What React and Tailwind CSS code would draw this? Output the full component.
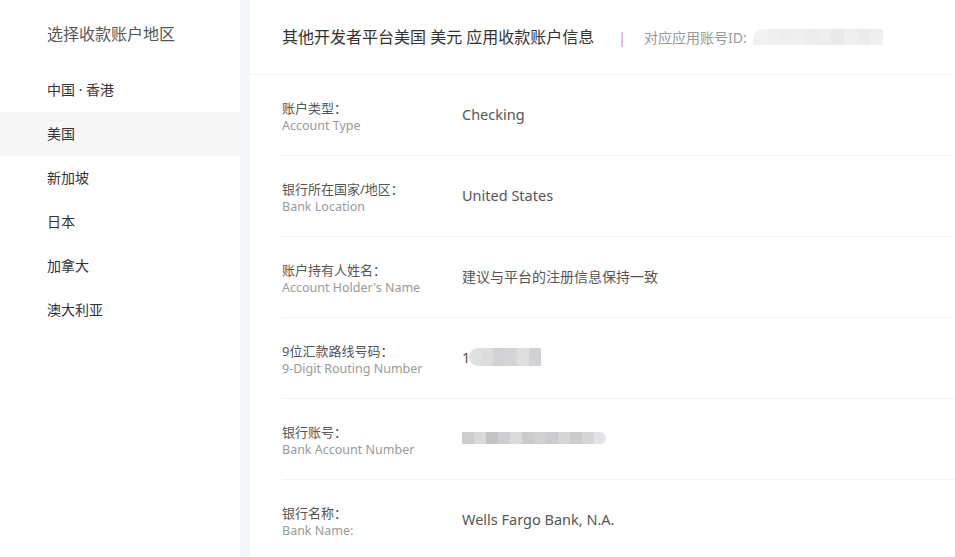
const regions = ['中国 · 香港', '美国', '新加坡', '日本', '加拿大', '澳大利亚'];

// blocs "floutés" : suites de gris
const idBlur = ['#f1f1f1', '#f0f0f0', '#eeeeee', '#efefef', '#ececec', '#eeeeee', '#e9e9e9', '#efefef', '#ebebeb', '#f0f0f0'];
const routingBlur = ['#e0e0e0', '#dcdcdc', '#d2d2d4', '#d4d4d6', '#dedede', '#d0d1d4'];
const accountBlur = ['#cdcdcd', '#d9d9d9', '#c3c3c3', '#cdced1', '#dadada', '#cbcbcb', '#d0d0d0', '#cacbcf', '#d6d6d6', '#ccccd0', '#d6d6d6', '#e0e2e6'];

function Blur({ colors, cell = 12, h = 12, rounded = '' }) {
  return (
    <span className={`inline-flex overflow-hidden ${rounded}`} style={{ height: h }}>
      {colors.map((c, i) => (
        <span key={i} style={{ width: cell, background: c }} />
      ))}
    </span>
  );
}

function Row({ zh, en, children }) {
  return (
    <div className="flex items-center h-[81px] border-b border-[#eef3f8]">
      <div className="w-[180px] shrink-0 pt-[2px]">
        <div className="text-[13px] leading-[18px] text-[#555]">{zh}</div>
        <div className="text-[12.5px] leading-[17px] text-[#999]">{en}</div>
      </div>
      <div className="text-[14.5px] text-[#555]">{children}</div>
    </div>
  );
}

export default function App() {
  return (
    <div className="flex w-[955px] h-[557px] overflow-hidden bg-[#f3f6fa] font-['Noto_Sans','Noto_Sans_CJK_SC',sans-serif]">
      <aside className="w-[240px] shrink-0 bg-white">
        <div className="h-[68px] flex items-center pl-[47px] text-[16px] text-[#555]">选择收款账户地区</div>
        {regions.map((r) => (
          <div
            key={r}
            className={`h-[44px] flex items-center pl-[47px] pb-[1px] text-[14px] text-[#333] ${r === '美国' ? 'bg-[#f7f7f7]' : ''}`}
          >
            {r}
          </div>
        ))}
      </aside>

      <main className="ml-[10px] flex-1 bg-white">
        <div className="h-[75px] flex items-center pl-[32px] border-b border-[#eef3f8]">
          <span className="text-[16px] text-[#333]">其他开发者平台美国 美元 应用收款账户信息</span>
          <span className="ml-[24px] text-[14px] text-[#d98aa8]">|</span>
          <span className="ml-[18px] text-[14px] text-[#999]">对应应用账号ID:</span>
          <span className="ml-[6px] mt-[4px]">
            <Blur colors={idBlur} cell={13} h={16} rounded="rounded-tl-[10px]" />
          </span>
        </div>

        <div className="pl-[32px]">
          <Row zh="账户类型：" en="Account Type">Checking</Row>
          <Row zh="银行所在国家/地区：" en="Bank Location">United States</Row>
          <Row zh="账户持有人姓名：" en="Account Holder's Name">
            <span className="text-[14px]">建议与平台的注册信息保持一致</span>
          </Row>
          <Row zh="9位汇款路线号码：" en="9-Digit Routing Number">
            <span className="inline-flex items-center">
              1
              <span className="-ml-[1px] mt-[4px]">
                <Blur colors={routingBlur} cell={12} h={18} rounded="rounded-l-[9px]" />
              </span>
            </span>
          </Row>
          <Row zh="银行账号：" en="Bank Account Number">
            <span className="inline-flex mt-[2px]">
              <Blur colors={accountBlur} cell={12} h={12} rounded="rounded-r-[6px]" />
            </span>
          </Row>
          <Row zh="银行名称：" en="Bank Name:">Wells Fargo Bank, N.A.</Row>
        </div>
      </main>
    </div>
  );
}
